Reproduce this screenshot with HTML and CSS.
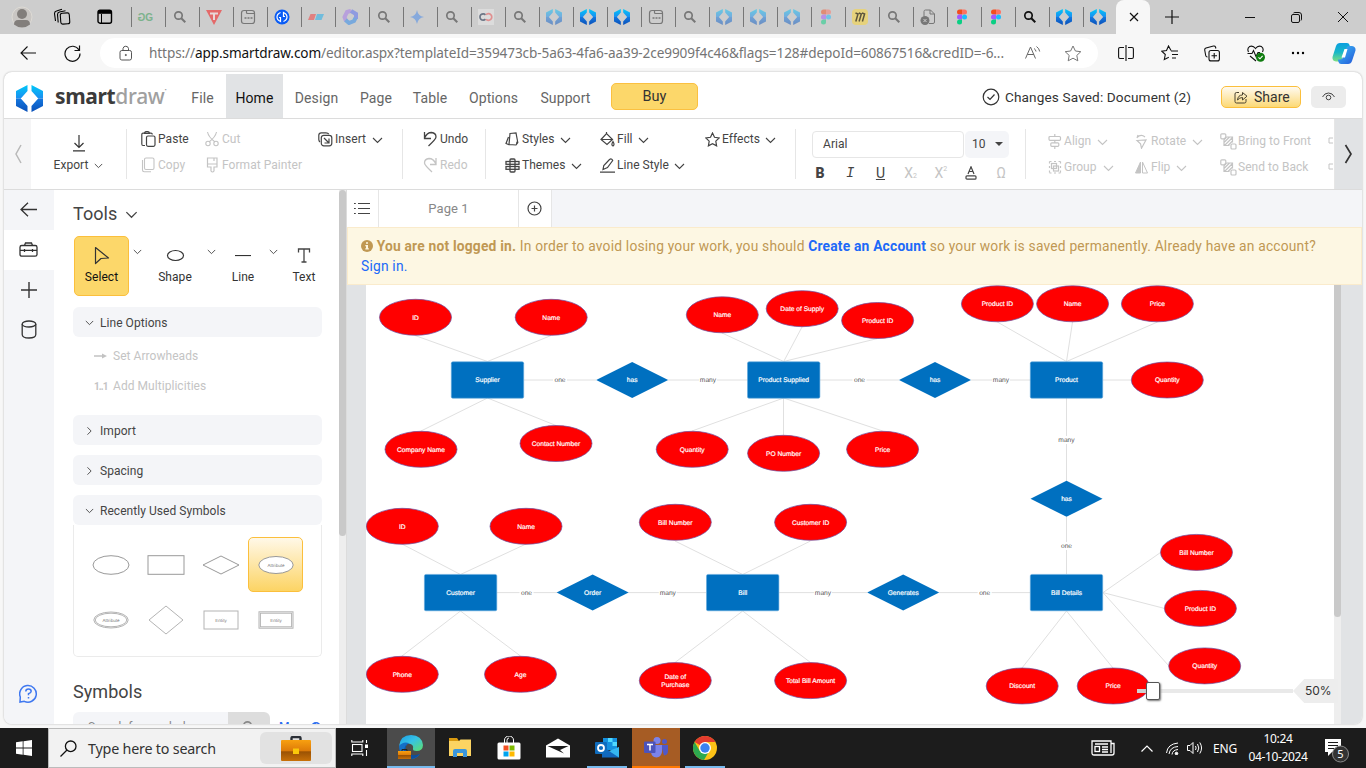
FILE: index.html
```html
<!DOCTYPE html>
<html lang="en">
<head>
<meta charset="utf-8">
<title>SmartDraw</title>
<link rel="stylesheet" href="styles.css">
</head>
<body>
<svg class="defs" width="0" height="0">
  <defs>
    <linearGradient id="gTop" x1="0" y1="0" x2="0" y2="1"><stop offset="0" stop-color="#00c8f8"/><stop offset="1" stop-color="#1a8df0"/></linearGradient>
    <linearGradient id="gBot" x1="0" y1="0" x2="0" y2="1"><stop offset="0" stop-color="#1478e0"/><stop offset="1" stop-color="#0a50b8"/></linearGradient>
    <linearGradient id="gBag" x1="0" y1="0" x2="0" y2="1"><stop offset="0" stop-color="#f8a010"/><stop offset=".52" stop-color="#dd7a08"/><stop offset=".56" stop-color="#9a5204"/><stop offset="1" stop-color="#c87008"/></linearGradient>
    <linearGradient id="gEdge" x1="0" y1="0" x2="1" y2="1"><stop offset="0" stop-color="#1b9de2"/><stop offset=".45" stop-color="#35c1e8"/><stop offset="1" stop-color="#5fe06a"/></linearGradient>
    <linearGradient id="gCop" x1="0" y1="0" x2="0" y2="1"><stop offset="0" stop-color="#0a9fe0"/><stop offset=".5" stop-color="#18b8c8"/><stop offset="1" stop-color="#7fe080"/></linearGradient>
    <linearGradient id="gCop2" x1="0" y1="0" x2="1" y2="1"><stop offset="0" stop-color="#3cc0f8"/><stop offset="1" stop-color="#2456d8"/></linearGradient>
  </defs>
  <symbol id="sd" viewBox="0 0 27 27">
    <path fill="url(#gTop)" d="M11.500 0v6L4.800 13.500H0V6zM15.500 0v6l6.700 7.500H27V6z"/>
    <path fill="url(#gBot)" d="M11.500 27v-6L4.800 13.400H0V21zM15.500 27v-6l6.700-7.600H27V21z"/>
  </symbol>
  <symbol id="mag" viewBox="0 0 16 16"><circle cx="6.500" cy="6.500" r="3.700" fill="none" stroke="currentColor" stroke-width="1.700"/><path d="M9.300 9.300l4 4" stroke="currentColor" stroke-width="2"/></symbol>
  <symbol id="frame" viewBox="0 0 16 16"><path d="M4 1.500h8q2.500 0 2.500 2.500v8q0 2.500-2.500 2.500H4Q1.500 14.500 1.500 12V4Q1.500 1.500 4 1.500zM6.500 1.500v2q0 1 1 1h7" fill="none" stroke="currentColor" stroke-width="1.200"/><path d="M4.500 9h2M7.500 9h2M10.500 9h2" stroke="currentColor" stroke-width="1.600"/></symbol>
  <symbol id="figma" viewBox="0 0 16 16"><path d="M8 .5H5.500a2.500 2.500 0 000 5H8z" fill="#f24e1e"/><path d="M8 .5h2.500a2.500 2.500 0 010 5H8z" fill="#ff7262"/><path d="M8 5.500H5.500a2.500 2.500 0 000 5H8z" fill="#a259ff"/><circle cx="10.500" cy="8" r="2.500" fill="#1abcfe"/><path d="M8 10.500H5.500a2.500 2.500 0 102.500 2.500z" fill="#0acf83"/></symbol>
  <symbol id="chev" viewBox="0 0 11 7"><path d="M1 1l4.500 4.500L10 1" fill="none" stroke="currentColor" stroke-width="1.100"/></symbol>
  <symbol id="bag" viewBox="0 0 30 25"><path d="M10.500 5V2.200Q10.500 1 12 1h6q1.500 0 1.500 1.200V5" fill="none" stroke="#2a2f36" stroke-width="2.400"/><rect y="4" width="30" height="21" rx="1" fill="url(#gBag)"/><rect x="12" y="12.500" width="6" height="5.500" fill="#fbc80a"/></symbol>
  <symbol id="pic-stack" viewBox="0 0 17 17"><g fill="none" stroke="currentColor" stroke-width="1.200"><rect x=".8" y=".8" width="5" height="5" rx="1"/><rect x="11" y="11" width="5" height="5" rx="1"/><path d="M7 4h5.500v5.500M4 7v5.500h5.500M4.500 9l5-5M4.500 12.500l8-8M8 12.500l4.500-4.500M7 4Q4.500 4 4 7"/></g></symbol>
  <g id="e"><ellipse rx="36" ry="18" fill="#f00" stroke="#6a4fa0" stroke-width=".7"/></g>
  <g id="r"><rect x="-36.200" y="-18.200" width="72.400" height="36.400" rx="1.500" fill="#0070c0" stroke="#62a8dc" stroke-width=".6"/></g>
  <g id="d"><path d="M-36 0L0-18 36 0 0 18z" fill="#0070c0"/></g>
</svg>

<div class="tabstrip">
  <div class="corner">
    <svg width="22" height="22" viewBox="0 0 22 22"><circle cx="11" cy="11" r="10" fill="#c9c6c3" stroke="#dedbd5"/><circle cx="11" cy="8" r="5" fill="#827e7b"/><path d="M3 18.500Q3 14 7 14h8q4 0 4 4.500-3.500 3-8 3t-8-3z" fill="#827e7b"/></svg>
    <svg width="18" height="18" viewBox="0 0 18 18" fill="none" stroke="#000" stroke-width="1.100"><rect x="7.500" y="5" width="9" height="11" rx="2" transform="rotate(-4 12 10)"/><path d="M5.200 14.500L4.500 6.500Q4.500 4.500 6.500 4l6-1.200M2.500 13L1.500 5.500Q1.500 3.500 3.500 3L9 1.200"/></svg>
    <svg width="16" height="16" viewBox="0 0 16 16" fill="none" stroke="#000"><rect x="1" y="1.200" width="13.500" height="13" rx="2" stroke-width="1.400"/><path d="M1 3.300h13.500" stroke-width="3"/><path d="M4.500 5v9"/></svg>
  </div>
  <div class="tabs">
    <div class="tab"><b class="gfg"><i>G</i>G</b></div>
    <div class="tab dim"><svg width="16" height="16"><use href="#mag"/></svg></div>
    <div class="tab"><svg width="16" height="16" viewBox="0 0 16 16"><path d="M0 1h16L8 16z" fill="#e46a6a"/><path d="M4 3.500h8v2H9V11H7V5.500H4z" fill="#e8d8d8"/></svg></div>
    <div class="tab dim"><svg width="16" height="16"><use href="#frame"/></svg></div>
    <div class="tab"><svg width="16" height="16" viewBox="0 0 16 16"><circle cx="8" cy="8" r="7.500" fill="#0a5cf5"/><path d="M6.500 3.500Q3 5 3 8t3.500 4.500V8.500H5M9.500 12.500Q13 11 13 8T9.500 3.500v4H11" fill="none" stroke="#fff" stroke-width="1.200"/></svg></div>
    <div class="tab"><svg width="16" height="16" viewBox="0 0 16 16"><path d="M2.500 5H8l-2 6H0z" fill="#e08080"/><path d="M9 5h7l-2.500 6H7z" fill="#70bcdc"/></svg></div>
    <div class="tab"><svg width="16" height="16" viewBox="0 0 16 16" fill="none" stroke-width="4"><path d="M4 12L2.500 8 5 3l4-1.200" stroke="#b8a0dc"/><path d="M9 2l5 3v5" stroke="#8f9be0"/><path d="M13.500 9L12 12l-5 2-3.500-3" stroke="#78a9dd"/></svg></div>
    <div class="tab dim"><svg width="16" height="16"><use href="#mag"/></svg></div>
    <div class="tab"><svg width="14" height="14" viewBox="0 0 14 14"><path d="M7 0Q8 6 14 7 8 8 7 14 6 8 0 7 6 6 7 0z" fill="#86a9dc"/></svg></div>
    <div class="tab dim"><svg width="16" height="16"><use href="#mag"/></svg></div>
    <div class="tab"><svg width="16" height="16" viewBox="0 0 16 16" fill="none" stroke-width="1.700"><rect width="16" height="16" fill="#dcdcdc"/><path d="M7.500 5.800a3.200 3.200 0 100 4.400" stroke="#6c7686"/><path d="M8 10.200a3.300 3.300 0 100-4.400" stroke="#e09090"/></svg></div>
    <div class="tab dim"><svg width="16" height="16"><use href="#mag"/></svg></div>
    <div class="tab fade"><svg width="16" height="16"><use href="#sd"/></svg></div>
    <div class="tab"><svg width="16" height="16"><use href="#sd"/></svg></div>
    <div class="tab"><svg width="16" height="16"><use href="#sd"/></svg></div>
    <div class="tab dim"><svg width="16" height="16"><use href="#frame"/></svg></div>
    <div class="tab dim"><svg width="16" height="16"><use href="#mag"/></svg></div>
    <div class="tab fade"><svg width="16" height="16"><use href="#sd"/></svg></div>
    <div class="tab fade"><svg width="16" height="16"><use href="#sd"/></svg></div>
    <div class="tab fade"><svg width="16" height="16"><use href="#sd"/></svg></div>
    <div class="tab fade"><svg width="16" height="16"><use href="#figma"/></svg></div>
    <div class="tab"><svg width="16" height="16" viewBox="0 0 16 16"><rect width="16" height="16" rx="4" fill="#e6d27c"/><path d="M3.500 4L6 5 3.800 12.500M6.800 4L9.300 5l-2.200 7.500M10 4l2.600 1-2.200 7.500" fill="none" stroke="#5c553c" stroke-width="1.500"/></svg></div>
    <div class="tab dim"><svg width="16" height="16"><use href="#mag"/></svg></div>
    <div class="tab dim"><svg width="16" height="16" viewBox="0 0 16 16"><path d="M4 7V2.500Q4 1 5.500 1h5L14.500 5v8q0 1.500-1.500 1.500H9M10 1v4h4.500" fill="none" stroke="currentColor"/><circle cx="5" cy="11.500" r="4.500" fill="currentColor"/><path d="M3.500 10l3 3M6.500 10l-3 3" stroke="#cdcdcd"/></svg></div>
    <div class="tab"><svg width="16" height="16"><use href="#figma"/></svg></div>
    <div class="tab"><svg width="16" height="16"><use href="#figma"/></svg></div>
    <div class="tab"><svg width="16" height="16"><use href="#mag"/></svg></div>
    <div class="tab"><svg width="16" height="16"><use href="#sd"/></svg></div>
    <div class="tab"><svg width="16" height="16"><use href="#sd"/></svg></div>
    <div class="tab-active"><svg width="10" height="10" viewBox="0 0 10 10"><path d="M1 1l8 8M9 1L1 9" stroke="#111" stroke-width="1.200"/></svg></div>
    <div class="tab-new"><svg width="14" height="14" viewBox="0 0 14 14"><path d="M7 0v14M0 7h14" stroke="#111" stroke-width="1.200"/></svg></div>
  </div>
  <div class="winctl">
    <svg width="10" height="10" viewBox="0 0 10 10"><path d="M0 5.500h10" stroke="#111"/></svg>
    <svg width="11" height="11" viewBox="0 0 11 11" fill="none" stroke="#111"><rect x=".5" y="2.500" width="8" height="8" rx="1.500"/><path d="M2.500 1Q3 .5 4 .5h4q2.500 0 2.500 2.500v4q0 1-.5 1.500"/></svg>
    <svg width="10" height="10" viewBox="0 0 10 10"><path d="M0 0l10 10M10 0L0 10" stroke="#111"/></svg>
  </div>
</div>

<div class="addressbar">
  <div class="navbtns">
    <svg width="16" height="14" viewBox="0 0 16 14" fill="none" stroke="#111" stroke-width="1.100"><path d="M16 7H1M7.500 .5L1 7l6.500 6.500"/></svg>
    <svg width="17" height="17" viewBox="0 0 17 17" fill="none" stroke="#111" stroke-width="1.200"><path d="M15 5a7.500 7.500 0 101 3.500M15.500 .5v5h-5"/></svg>
  </div>
  <div class="pill">
    <svg width="14" height="16" viewBox="0 0 14 16" fill="none" stroke="#555"><rect x="1" y="5.500" width="11.500" height="9.500" rx="1.800"/><path d="M4 5.500V3.500a2.800 2.800 0 015.500 0v2"/><circle cx="6.800" cy="10" r=".6" fill="#555"/></svg>
    <span class="url">https://<i>app.smartdraw.com</i>/editor.aspx?templateId=359473cb-5a63-4fa6-aa39-2ce9909f4c46&amp;flags=128#depoId=60867516&amp;credID=-6...</span>
    <svg class="read" width="16" height="16" viewBox="0 0 16 16" fill="none" stroke="#666"><path d="M.5 13.500L5.500 2l5 11.500M2.300 9.500h6.500M9 3.500q1.800 1 2 3M11.500 1.500q2.800 2 3.200 5"/></svg>
    <svg width="18" height="17" viewBox="0 0 18 17" fill="none" stroke="#777" stroke-linejoin="round"><path d="M9 1l2.400 5 5.400.7-4 3.700 1 5.400L9 13.200l-4.800 2.600 1-5.400-4-3.700L6.600 6z"/></svg>
  </div>
  <div class="tools-right">
    <svg width="16" height="16" viewBox="0 0 16 16" fill="none" stroke="#111" stroke-width="1.100"><path d="M6 2.500H2Q.6 2.500.6 4v8q0 1.500 1.400 1.500h4M10 2.500h4q1.400 0 1.400 1.500v8q0 1.500-1.400 1.500h-4M8 0v16"/></svg>
    <svg width="17" height="16" viewBox="0 0 17 16" fill="none" stroke="#111" stroke-width="1.100"><path d="M10 5.500L7.500 1 5.500 5.500.8 6.200l3.500 3.300-1 5 4.500-2.300M10 6h7M11 9.500h6M11 13h4"/></svg>
    <svg width="16" height="17" viewBox="0 0 16 17" fill="none" stroke="#111" stroke-width="1.100"><rect x="5" y="5.500" width="10.400" height="10.400" rx="2"/><path d="M3.500 12Q2 12 1.700 10.500L.7 5Q.5 3.500 2 3L9.500 1q1.500-.3 2 1l.4 1.500M10.200 8v5.500M7.500 10.700H13"/></svg>
    <svg width="18" height="17" viewBox="0 0 18 17" fill="none" stroke="#111" stroke-width="1.100"><path d="M1.500 7Q-.2 3.500 2.500 1.600 6 .2 8.500 3.500 11 .2 14.500 1.600 17.200 3.500 15.500 7M.5 8.500H5l1.500-3 2.500 6 2-4h2M3 11l6 5"/><circle cx="13.500" cy="12.300" r="4.500" fill="#107c10" stroke="none"/><path d="M11.500 12.300l1.500 1.500 2.600-3" stroke="#fff"/></svg>
    <svg width="14" height="4" viewBox="0 0 14 4"><circle cx="2" cy="2" r="1.200"/><circle cx="7" cy="2" r="1.200"/><circle cx="12" cy="2" r="1.200"/></svg>
    <svg width="24" height="23" viewBox="0 0 24 23"><path d="M8 1h7q2 0 2.500 2l1 3.500h-3q-2.500 0-3 2.500L10 17q-.6 2.500-3 2.500H4Q0 19 .5 15L4 4q1-3 4-3z" fill="url(#gCop)"/><path d="M16 22H9q-2 0-2.500-2l-.7-2.500H8q2.500 0 3-2.500L14 6.500q.6-2.500 3-2.500h3q4 .5 3.500 4.500L20 19q-1 3-4 3z" fill="url(#gCop2)"/><path d="M9.500 15.500L12.500 7h3l-2.500 8.500z" fill="#fff"/></svg>
  </div>
</div>

<div class="app">
  <header class="head">
    <svg class="logo" width="27" height="27"><use href="#sd"/></svg>
    <div class="brand"><b>smart</b><span>draw</span><sup>&#8226;</sup></div>
    <nav class="menu">
      <a class="m1">File</a><a class="m2">Home</a><a class="m3">Design</a><a class="m4">Page</a><a class="m5">Table</a><a class="m6">Options</a><a class="m7">Support</a>
    </nav>
    <div class="buy">Buy</div>
    <div class="saved"><svg width="18" height="18" viewBox="0 0 18 18" fill="none" stroke="#333" stroke-width="1.200"><circle cx="9" cy="9" r="7.800"/><path d="M5.500 9l2.500 2.500 4.500-5"/></svg><span>Changes Saved: Document (2)</span></div>
    <div class="share"><svg width="14" height="14" viewBox="0 0 14 14" fill="none" stroke="#4a4330"><path d="M5 2.500H2.500Q1 2.500 1 4v7.500Q1 13 2.500 13h8q1.500 0 1.500-1.500V9M3.500 10Q4 5 8.500 5V2.500L13 6.200 8.500 10V7.500Q5.500 7.500 3.500 10z"/></svg><span>Share</span></div>
    <div class="eye"><svg width="13" height="10" viewBox="0 0 13 10" fill="none" stroke="#444"><path d="M.5 5Q2.500 1 6.500 1t6 4"/><circle cx="6.500" cy="5.500" r="2.300"/></svg></div>
  </header>

  <div class="ribbon">
    <div class="arrow-l"><svg width="8" height="20" viewBox="0 0 8 20" fill="none" stroke="#b8b8b8" stroke-width="1.500"><path d="M7 1L2 10l5 9"/></svg></div>
    <div class="grp g-export">
      <svg width="14" height="18" viewBox="0 0 14 18" fill="none" stroke="#333" stroke-width="1.200"><path d="M7 1v12.500M2.500 9L7 13.500 11.500 9M1 16.800h12"/></svg>
      <div class="btn">Export <svg width="9" height="6"><use href="#chev"/></svg></div>
    </div>
    <div class="grp g-clip">
      <div class="btn"><svg width="15" height="16" viewBox="0 0 15 16" fill="none" stroke="#444" stroke-width="1.200"><path d="M4 14.500H2Q.8 14.500.8 13V3.500Q.8 2.200 2 2.200h8q1.300 0 1.300 1.300M3.500 2.500q0-2 2.500-2t2.500 2z"/><rect x="5.500" y="5" width="8.500" height="10.300" rx="1.500"/></svg>Paste</div>
      <div class="btn off"><svg width="15" height="16" viewBox="0 0 15 16" fill="none" stroke="currentColor" stroke-width="1.100"><path d="M2.500 1q1 5 7.500 10M11.500 1q-1 5-7.500 10"/><circle cx="3" cy="12.500" r="2.200"/><circle cx="11" cy="12.500" r="2.200"/></svg>Cut</div>
      <div class="btn"><svg width="15" height="15" viewBox="0 0 15 15" fill="none" stroke="#444" stroke-width="1.200"><rect x="3.300" y="3.300" width="10.500" height="10.500" rx="2.500"/><path d="M2 10Q.8 9 .8 7.500V3.300Q.8.800 3.300.8H8q2 0 2.800 1.300M6 6l5 5M11 6.500V11H6.500"/></svg>Insert<svg class="cv" width="11" height="7"><use href="#chev"/></svg></div>
      <div class="btn off"><svg width="15" height="16" viewBox="0 0 15 16" fill="none" stroke="currentColor" stroke-width="1.100"><rect x="3.500" y="1" width="9.500" height="11.500" rx="1.500"/><path d="M1.500 3v10q0 1.700 1.700 1.700H10"/></svg>Copy</div>
      <div class="btn off"><svg width="15" height="16" viewBox="0 0 15 16" fill="none" stroke="currentColor" stroke-width="1.200"><path d="M2.500 1h9.500v9H9v4q-1.500 2-3 0v-4H2.500zM2.500 7H12M9 1v3"/></svg>Format Painter</div>
    </div>
    <div class="grp g-undo">
      <div class="btn"><svg width="15" height="16" viewBox="0 0 15 16" fill="none" stroke="#444" stroke-width="1.300"><path d="M1.500 1v6.500H8M1.500 7Q4 1.500 8.500 1.500 13 2 13 6q0 2-7.500 9"/></svg>Undo</div>
      <div class="btn off"><svg width="15" height="16" viewBox="0 0 15 16" fill="none" stroke="currentColor" stroke-width="1.300"><path d="M13 1v6.500H7M13 7Q10.500 1.500 6 1.500 1.500 2 1.500 6q0 2 7.500 9"/></svg>Redo</div>
    </div>
    <div class="grp g-style">
      <div class="btn"><svg width="15" height="14" viewBox="0 0 15 14" fill="none" stroke="#444" stroke-width="1.200"><path d="M5 1.500l6-.7 1.800 9.700-1.800 2.500-7-.5zM3.500 5L1 11.500l3 1.300M11.500 12l.5-2h1.200"/></svg>Styles<svg class="cv" width="11" height="7"><use href="#chev"/></svg></div>
      <div class="btn"><svg width="15" height="15" viewBox="0 0 15 15" fill="none" stroke="#444" stroke-width="1.200"><path d="M1 7.500L6.500 1.500l6 6-5.500 5zM6.500 1.500V0M1 7.500h11.500"/><path d="M13 9.500q2 3.200 0 4.500-2.200-1 0-4.500z"/></svg>Fill<svg class="cv" width="11" height="7"><use href="#chev"/></svg></div>
      <div class="btn"><svg width="15" height="15" viewBox="0 0 15 15" fill="none" stroke="#444" stroke-width="1.200"><path d="M7.500 1l2 4.300 4.700.6-3.400 3.200.8 4.700-4.100-2.200-4.100 2.200.8-4.700L.8 5.900l4.700-.6z"/></svg>Effects<svg class="cv" width="11" height="7"><use href="#chev"/></svg></div>
      <div class="btn"><svg width="15" height="15" viewBox="0 0 15 15" fill="none" stroke="#444" stroke-width="1.300"><rect x="5" y="1" width="5" height="13" rx="1"/><rect x="1" y="3.500" width="13" height="2.800"/><rect x="1" y="8.500" width="13" height="2.800"/></svg>Themes<svg class="cv" width="11" height="7"><use href="#chev"/></svg></div>
      <div class="btn wide"><svg width="15" height="15" viewBox="0 0 15 15" fill="none" stroke="#444" stroke-width="1.200"><path d="M3 11.500l.8-4L9.500 1.500q2-1.500 3.200 1L7.500 9.500zM0 14.200h15"/></svg>Line Style<svg class="cv" width="11" height="7"><use href="#chev"/></svg></div>
    </div>
    <div class="grp g-font">
      <div class="fontrow"><div class="fname">Arial</div><div class="fsize">10<svg width="8" height="4" viewBox="0 0 8 4"><path d="M0 0h8L4 4z" fill="#444"/></svg></div></div>
      <div class="fmt">
        <b>B</b><em>I</em><u>U</u><span class="off">X<sub>2</sub></span><span class="off">X<sup>2</sup></span>
        <span><svg width="12" height="14" viewBox="0 0 12 14" fill="none" stroke="#444" stroke-width="1.200"><path d="M3 8L6 .8 9 8M4 5.500h4"/><rect x="1" y="9.800" width="10" height="3.400" rx="1"/></svg></span>
        <span class="off">&Omega;</span>
      </div>
    </div>
    <div class="grp g-arr">
      <div class="btn off"><svg width="14" height="15" viewBox="0 0 14 15" fill="none" stroke="currentColor" stroke-width="1.200"><rect x="1" y="2.500" width="11.500" height="3.800" rx="1"/><rect x="2.800" y="8.800" width="8" height="3.500" rx="1"/><path d="M6.800 0v2.500M6.800 6.300v2.500M6.800 12.500V15"/></svg>Align<svg class="cv" width="11" height="7"><use href="#chev"/></svg></div>
      <div class="btn off"><svg width="14" height="15" viewBox="0 0 14 15" fill="none" stroke="currentColor" stroke-width="1.200"><path d="M2 6.500l9-.5-4.500 8.200-1-4.500zM2 4l1-3M2 3.500Q6-.5 10 3"/></svg>Rotate<svg class="cv" width="11" height="7"><use href="#chev"/></svg></div>
      <div class="btn off stk"><svg width="17" height="17"><use href="#pic-stack"/></svg>Bring to Front</div>
      <div class="btn off"><svg width="5" height="8" viewBox="0 0 5 8" fill="none" stroke="currentColor"><path d="M5 1H1v5h4"/></svg></div>
      <div class="btn off"><svg width="14" height="15" viewBox="0 0 14 15" fill="none" stroke="currentColor" stroke-width="1.200"><rect x="3.500" y="3.500" width="5" height="5"/><rect x="5.500" y="6" width="5" height="5"/><path d="M1.500 1.500v11.500M12.500 1.500v11.500M1.500 1.500h11M1.500 13h11" stroke-dasharray="2 2.500"/></svg>Group<svg class="cv" width="11" height="7"><use href="#chev"/></svg></div>
      <div class="btn off"><svg width="14" height="13" viewBox="0 0 14 13" fill="none" stroke="currentColor"><path d="M5.500 1v11H.5z" fill="currentColor"/><path d="M7.500 1v11h5z"/></svg>Flip<svg class="cv" width="11" height="7"><use href="#chev"/></svg></div>
      <div class="btn off stk"><svg width="17" height="17"><use href="#pic-stack"/></svg>Send to Back</div>
      <div class="btn off"><svg width="5" height="8" viewBox="0 0 5 8" fill="none" stroke="currentColor"><path d="M5 1H1v5h4"/></svg></div>
    </div>
    <div class="arrow-r"><svg width="9" height="20" viewBox="0 0 9 20" fill="none" stroke="#333" stroke-width="1.700"><path d="M1.500 1l5.500 9-5.500 9"/></svg></div>
  </div>

  <div class="main">
    <div class="rail">
      <div class="r"><svg width="17" height="15" viewBox="0 0 17 15" fill="none" stroke="#333" stroke-width="1.300"><path d="M17 7.500H1M8 .7L1 7.500l7 6.800"/></svg></div>
      <div class="r on"><svg width="19" height="15" viewBox="0 0 19 15" fill="none" stroke="#333" stroke-width="1.300"><rect x="1" y="3.500" width="17" height="10.700" rx="1.800"/><path d="M5.500 3.500L6.500 1h6l1 2.500M1 8.300h17M5.500 7v3M13.500 7v3"/></svg></div>
      <div class="r"><svg width="16" height="16" viewBox="0 0 16 16" stroke="#333" stroke-width="1.400"><path d="M8 0v16M0 8h16"/></svg></div>
      <div class="r"><svg width="16" height="19" viewBox="0 0 16 19" fill="none" stroke="#333" stroke-width="1.300"><ellipse cx="8" cy="4" rx="6.800" ry="3"/><path d="M1.200 4v10.500Q1.200 18 8 18t6.800-3.500V4"/></svg></div>
      <div class="help"><svg width="19" height="19" viewBox="0 0 19 19" fill="none" stroke="#3f78f0" stroke-width="1.500"><path d="M1 18l.3-5a8.300 8.300 0 114 4.300zM6.800 7.500q0-2.500 2.700-2.500t2.700 2.300q0 1.500-2.700 2.500v1.500M9.500 13v1.500"/></svg></div>
    </div>

    <div class="panel">
      <div class="ptitle">Tools <svg width="13" height="8"><use href="#chev"/></svg></div>
      <div class="toolrow">
        <div class="tool sel"><svg width="16" height="19" viewBox="0 0 16 19" fill="none" stroke="#333" stroke-width="1.200" stroke-linejoin="round"><path d="M1.500 1.500L14.500 12 7 12.500 1.500 17.500z"/></svg>Select</div>
        <svg class="tcv" width="9" height="6"><use href="#chev"/></svg>
        <div class="tool t2"><svg width="19" height="19" viewBox="0 0 19 19" fill="none" stroke="#333" stroke-width="1.200"><ellipse cx="9.500" cy="9.500" rx="8" ry="5"/></svg>Shape</div>
        <svg class="tcv" width="9" height="6"><use href="#chev"/></svg>
        <div class="tool t3"><svg width="18" height="19" viewBox="0 0 18 19" stroke="#333" stroke-width="1.200"><path d="M1 9.500h16"/></svg>Line</div>
        <svg class="tcv" width="9" height="6"><use href="#chev"/></svg>
        <div class="tool t4"><svg width="14" height="19" viewBox="0 0 14 19" fill="none" stroke="#444" stroke-width="1.300"><path d="M1.500 6.500V3h11v3.500M7 3v12.500M4.500 16h5"/></svg>Text</div>
      </div>
      <div class="acc"><svg width="9" height="6"><use href="#chev"/></svg>Line Options</div>
      <div class="opt o1"><svg width="13" height="8" viewBox="0 0 13 8" fill="#c2c2c2"><path d="M0 3.200h8V1.500L13 4 8 6.500V4.800H0z"/></svg>Set Arrowheads</div>
      <div class="opt o2"><b>1..1</b>Add Multiplicities</div>
      <div class="acc closed"><svg width="9" height="6"><use href="#chev"/></svg>Import</div>
      <div class="acc closed"><svg width="9" height="6"><use href="#chev"/></svg>Spacing</div>
      <div class="acc open"><svg width="9" height="6"><use href="#chev"/></svg>Recently Used Symbols</div>
      <div class="syms">
        <div><svg width="38" height="20" viewBox="0 0 38 20"><ellipse cx="19" cy="10" rx="18" ry="9.300"/></svg></div>
        <div><svg width="38" height="20" viewBox="0 0 38 20"><rect x="1" y=".7" width="36" height="18.600"/></svg></div>
        <div><svg width="38" height="20" viewBox="0 0 38 20"><path d="M1 10L19 1l18 9-18 9z"/></svg></div>
        <div class="pick"><svg width="38" height="20" viewBox="0 0 38 20"><ellipse cx="19" cy="10" rx="17.200" ry="8.500" fill="#fff"/><text x="19" y="12">Attribute</text></svg></div>
        <div class="soft"><svg width="38" height="20" viewBox="0 0 38 20"><ellipse cx="19" cy="10" rx="17.200" ry="8"/><ellipse cx="19" cy="10" rx="15.800" ry="6.800"/><text x="19" y="12">Attribute</text></svg></div>
        <div class="soft"><svg width="36" height="30" viewBox="0 0 36 30"><path d="M1 15L18 1l17 14-17 14z"/></svg></div>
        <div class="soft"><svg width="38" height="20" viewBox="0 0 38 20"><rect x="2" y="1" width="34" height="18"/><text x="19" y="12">Entity</text></svg></div>
        <div class="soft"><svg width="38" height="20" viewBox="0 0 38 20"><rect x="2" y="1.800" width="34" height="16.400"/><rect x="3.400" y="3.200" width="31.200" height="13.600"/><text x="19" y="12">Entity</text></svg></div>
      </div>
      <div class="ptitle2">Symbols</div>
      <div class="find"><span class="ph">Search for symbols</span><span class="go"><svg width="16" height="16"><use href="#mag"/></svg></span><b>More</b><i>+</i></div>
    </div>
    <div class="pscroll"><div></div></div>

    <div class="work">
      <div class="pages">
        <div class="plist"><svg width="16" height="13" viewBox="0 0 16 13" fill="none" stroke="#444" stroke-width="1.200"><path d="M4 1.500h12M4 6.500h12M4 11.500h12M0 1.500h1.800M0 6.500h1.800M0 11.500h1.800"/></svg></div>
        <div class="pname">Page 1</div>
        <div class="padd"><svg width="15" height="15" viewBox="0 0 15 15" fill="none" stroke="#444" stroke-width="1.200"><circle cx="7.500" cy="7.500" r="6.500"/><path d="M7.500 4.500v6M4.500 7.500h6"/></svg></div>
      </div>
      <div class="warn">
        <svg width="12" height="12" viewBox="0 0 12 12"><circle cx="6" cy="6" r="6" fill="#c09853"/><path d="M5 2.300h2v1.500H5zM4.300 5H7v3.200h.8v1.300H4.300V8.200H5V6.300h-.7z" fill="#fdf6e1"/></svg><b> You are not logged in.</b> In order to avoid losing your work, you should <b class="lk">Create an Account</b> so your work is saved permanently. Already have an account?<br><span class="lk">Sign in.</span>
      </div>
      <div class="stage">
        <svg class="diagram" width="968" height="439" viewBox="366 285 968 439">
          <g class="ln">
            <path d="M415 335.500L487.500 361.500 551 335.500M421 431L487.500 398 556 425.500M524 380h72M668 380h80"/>
            <path d="M722 333L783.700 361.500 802 327M783.700 361.500L877.600 338.500M692 431L783.700 398 882.600 431M783.500 398v37M820 380h79M971 380h60M1103 380h28"/>
            <path d="M997.300 322L1066.500 361.500 1072.500 322M1066.500 361.500L1157.500 322M1066.500 398v83M1066.500 517v57"/>
            <path d="M402 544L460.500 574.500 526 544M402 656L460.500 611 520.500 656M497 592.600h60M628 592.600h78"/>
            <path d="M675 541L742.700 574.500 810.500 541M675 662.500L742.700 611 810.500 662.500M779 592.600h88M939 592.600h91"/>
            <path d="M1160.500 552.500L1103 592.600 1164 608.300M1103 592.600L1168.500 665.500M1022 668L1066.500 611 1113 668"/>
          </g>
          <g class="lb">
            <g transform="translate(560 380)"><rect x="-7" y="-4" width="14" height="8"/><text>one</text></g>
            <g transform="translate(708 380)"><rect x="-9" y="-4" width="18" height="8"/><text>many</text></g>
            <g transform="translate(859.500 380)"><rect x="-7" y="-4" width="14" height="8"/><text>one</text></g>
            <g transform="translate(1001 380)"><rect x="-9" y="-4" width="18" height="8"/><text>many</text></g>
            <g transform="translate(1066.500 440)"><rect x="-9" y="-4" width="18" height="8"/><text>many</text></g>
            <g transform="translate(1066.500 546)"><rect x="-7" y="-4" width="14" height="8"/><text>one</text></g>
            <g transform="translate(526.500 592.600)"><rect x="-7" y="-4" width="14" height="8"/><text>one</text></g>
            <g transform="translate(667.800 592.600)"><rect x="-9" y="-4" width="18" height="8"/><text>many</text></g>
            <g transform="translate(823 592.600)"><rect x="-9" y="-4" width="18" height="8"/><text>many</text></g>
            <g transform="translate(984.700 592.600)"><rect x="-7" y="-4" width="14" height="8"/><text>one</text></g>
          </g>
          <g class="nd">
            <g transform="translate(415.500 317.300)"><use href="#e"/><text>ID</text></g>
            <g transform="translate(551.200 317.300)"><use href="#e"/><text>Name</text></g>
            <g transform="translate(722.300 314.800)"><use href="#e"/><text>Name</text></g>
            <g transform="translate(802.200 308.700)"><use href="#e"/><text>Date of Supply</text></g>
            <g transform="translate(877.600 320.500)"><use href="#e"/><text>Product ID</text></g>
            <g transform="translate(997.400 303.800)"><use href="#e"/><text>Product ID</text></g>
            <g transform="translate(1072.600 303.800)"><use href="#e"/><text>Name</text></g>
            <g transform="translate(1157.400 303.800)"><use href="#e"/><text>Price</text></g>
            <g transform="translate(1167.300 380)"><use href="#e"/><text>Quantity</text></g>
            <g transform="translate(421 449.300)"><use href="#e"/><text>Company Name</text></g>
            <g transform="translate(556 443.500)"><use href="#e"/><text>Contact Number</text></g>
            <g transform="translate(692.200 449.300)"><use href="#e"/><text>Quantity</text></g>
            <g transform="translate(783.600 453.300)"><use href="#e"/><text>PO Number</text></g>
            <g transform="translate(882.600 449.300)"><use href="#e"/><text>Price</text></g>
            <g transform="translate(402.300 526.300)"><use href="#e"/><text>ID</text></g>
            <g transform="translate(526 526.300)"><use href="#e"/><text>Name</text></g>
            <g transform="translate(675.300 522.300)"><use href="#e"/><text>Bill Number</text></g>
            <g transform="translate(810.600 522.300)"><use href="#e"/><text>Customer ID</text></g>
            <g transform="translate(402.300 674.300)"><use href="#e"/><text>Phone</text></g>
            <g transform="translate(520.500 674.300)"><use href="#e"/><text>Age</text></g>
            <g transform="translate(675.300 680.600)"><use href="#e"/><text><tspan x="0" dy="-4">Date of</tspan><tspan x="0" dy="8">Purchase</tspan></text></g>
            <g transform="translate(810.600 680.600)"><use href="#e"/><text>Total Bill Amount</text></g>
            <g transform="translate(1196.500 552.400)"><use href="#e"/><text>Bill Number</text></g>
            <g transform="translate(1200.400 608.400)"><use href="#e"/><text>Product ID</text></g>
            <g transform="translate(1204.700 665.900)"><use href="#e"/><text>Quantity</text></g>
            <g transform="translate(1022.200 686)"><use href="#e"/><text>Discount</text></g>
            <g transform="translate(1113.200 686)"><use href="#e"/><text>Price</text></g>
            <g transform="translate(487.500 380)"><use href="#r"/><text>Supplier</text></g>
            <g transform="translate(783.700 380)"><use href="#r"/><text>Product Supplied</text></g>
            <g transform="translate(1066.500 380)"><use href="#r"/><text>Product</text></g>
            <g transform="translate(460.600 592.600)"><use href="#r"/><text>Customer</text></g>
            <g transform="translate(742.700 592.600)"><use href="#r"/><text>Bill</text></g>
            <g transform="translate(1066.500 592.600)"><use href="#r"/><text>Bill Details</text></g>
            <g transform="translate(632.200 380)"><use href="#d"/><text>has</text></g>
            <g transform="translate(935 380)"><use href="#d"/><text>has</text></g>
            <g transform="translate(1066.500 498.800)"><use href="#d"/><text>has</text></g>
            <g transform="translate(592.600 592.600)"><use href="#d"/><text>Order</text></g>
            <g transform="translate(903.200 592.600)"><use href="#d"/><text>Generates</text></g>
          </g>
        </svg>
        <div class="vscroll"><div></div></div>
        <div class="zoom"><div class="track"></div><div class="knob"></div><div class="pct">50%</div></div>
      </div>
    </div>
  </div>
</div>

<div class="taskbar">
  <div class="start"><svg width="16" height="16" viewBox="0 0 16 16" fill="#fff"><path d="M0 2.200L6.700 1.300v6.300H0zM7.500 1.200L16 0v7.600H7.500zM0 8.400h6.700v6.300L0 13.800zM7.500 8.400H16V16l-8.500-1.200z"/></svg></div>
  <div class="tsearch"><svg width="17" height="17" viewBox="0 0 17 17" fill="none" stroke="#111" stroke-width="1.300"><circle cx="10.700" cy="6.300" r="5.300"/><path d="M7 10L.5 16.500"/></svg><span>Type here to search</span><div class="tbag"><svg width="30" height="25"><use href="#bag"/></svg></div></div>
  <div class="ti"><svg width="18" height="16" viewBox="0 0 18 16" fill="none" stroke="#fff" stroke-width="1.100"><rect x="1.500" y="4.500" width="9.500" height="7"/><path d="M.8 0v2h11V0M.8 16v-2h11v2M15.500 0v3M15.500 10v6"/><path d="M15.500 4.500V8" stroke-width="3"/></svg></div>
  <div class="ti edge"><svg width="26" height="26" viewBox="0 0 26 26"><path d="M1 12Q2.500 1 13 1q11 .5 12 10-.2 6-6.500 6-4 0-3.500-2.500.8-3.500-2.500-4.500Q5 8 1 12z" fill="url(#gEdge)"/><path d="M1 12q4-5 10-3-5 3-3 8 2 5 8 5 4 0 6-2-3.500 5-9 5Q1.500 24 1 12z" fill="#1470c8"/><path d="M9 10q-3 4 0 8 4 5 13 2-4 5-10 5-7-1-6-8 .5-5 3-7z" fill="#0d4f9e"/><rect y="17" width="13" height="8" fill="url(#gBag)"/><path d="M4 17v-1.500h5V17" fill="none" stroke="#222"/></svg></div>
  <div class="ti"><svg width="24" height="20" viewBox="0 0 24 20"><path d="M1 0h8l2 3H1z" fill="#d99a10"/><path d="M1 3l10 0 1.500-1.500H23V18H1z" fill="#fcd462"/><path d="M5 19v-6q0-2 2-2h10q2 0 2 2v6h-4v-4H9v4z" fill="#3a96dc"/></svg></div>
  <div class="ti"><svg width="24" height="24" viewBox="0 0 24 24"><path d="M7.500 7V4a4.500 4 0 019 0v3M10 7V4.500Q10 2 12 2" fill="none" stroke="#fff"/><rect x=".5" y="6.500" width="23" height="17" rx="1.500" fill="#fff"/><path d="M6.500 9.500h5v5h-5z" fill="#f25022"/><path d="M12.500 9.500h5v5h-5z" fill="#7fba00"/><path d="M6.500 15.500h5v5h-5z" fill="#00a4ef"/><path d="M12.500 15.500h5v5h-5z" fill="#ffb900"/></svg></div>
  <div class="ti"><svg width="24" height="20" viewBox="0 0 24 20"><path d="M0 7.500L12 .5l12 7v12H0z" fill="#fff"/><path d="M1.500 8h21L14 12l4 3.500z" fill="#1c1c1c"/></svg></div>
  <div class="ti ul"><svg width="25" height="22" viewBox="0 0 25 22"><rect x="8" y="1" width="14" height="12" fill="#1490df"/><path d="M13 1h4.500v4H13zM17.500 5H22v4h-4.500z" fill="#50d9ff"/><path d="M7 9l9 6 8-5v10.500H7z" fill="#1268bc"/><path d="M24 10v10.500L14 14z" fill="#35b8f1"/><rect y="5" width="12" height="12" rx="1" fill="#0f6cbd"/><circle cx="6" cy="11" r="3" fill="none" stroke="#fff" stroke-width="1.800"/></svg></div>
  <div class="ti teams"><svg width="24" height="22" viewBox="0 0 24 22"><circle cx="13" cy="4.500" r="3.500" fill="#7b83eb"/><circle cx="20.500" cy="5.500" r="2.500" fill="#5059c9"/><path d="M17 9h7v6q0 4-4 4.500z" fill="#5059c9"/><path d="M7 9h11v7q-1 5-5.500 5.500Q7 21 7 15z" fill="#7b83eb"/><rect y="5.500" width="11.500" height="11.500" rx="1" fill="#4b53bc"/><path d="M3 8.500h6M6 8.500v6" stroke="#fff" stroke-width="1.500"/></svg></div>
  <div class="ti ul"><svg width="24" height="24" viewBox="0 0 24 24"><circle cx="12" cy="12" r="12" fill="#fbc116"/><path d="M12 12L1.600 6A12 12 0 0122.400 6H12z" fill="#e33b2e"/><path d="M1.600 6A12 12 0 0011 24l5.500-9.500L12 12 6.800 15z" fill="#2da94f"/><circle cx="12" cy="12" r="6" fill="#fff"/><circle cx="12" cy="12" r="4.700" fill="#3b82f0"/></svg></div>
  <div class="tray">
    <svg width="24" height="16" viewBox="0 0 24 16" fill="none" stroke="#fff" stroke-width="1.300"><path d="M20 3.500h3V13q0 2-2 2H3q-2 0-2-2V1h19v12"/><rect x="4" y="6.500" width="4.500" height="5"/><path d="M4 4h13M11 7h6M11 9.500h6M11 12h6"/></svg>
    <svg class="up" width="12" height="7" viewBox="0 0 12 7" fill="none" stroke="#fff" stroke-width="1.200"><path d="M.5 6.500L6 1l5.500 5.500"/></svg>
    <svg class="wifi" width="13" height="13" viewBox="0 0 13 13" fill="none" stroke="#fff"><path d="M.5 11Q1.500 2 12 1M3 12q1-7 9-7.500M6 12.500Q6.500 8 12 7.500"/><circle cx="10.500" cy="11.500" r="1.300" fill="#fff"/></svg>
    <svg class="vol" width="16" height="14" viewBox="0 0 16 14" fill="none" stroke="#fff"><path d="M.5 4.500v5H3L6 12.500V1.500L3 4.500zM8.500 5q1.200 2 0 4M10.500 3q2.600 4 0 8M12.800 1.500q3.500 5.500 0 11"/></svg>
    <span class="lang">ENG</span>
    <div class="clock"><span>10:24</span><span>04-10-2024</span></div>
    <svg class="note" width="26" height="30" viewBox="0 0 26 30"><path d="M1 6h16v13H8l-4 4v-4H1z" fill="#fff"/><path d="M4 9.500h10M4 12.500h10M4 15.500h6" stroke="#1c1c1c"/><circle cx="16.500" cy="21" r="8" fill="#333" stroke="#8a8a8a"/><text x="16.500" y="25">5</text></svg>
  </div>
</div>
</body>
</html>
```
FILE: styles.css
```css
* { box-sizing: border-box; }
body { margin: 0; width: 1366px; height: 768px; overflow: hidden; display: flex; flex-direction: column; background: #f7f7f7; font-family: Roboto, sans-serif; color: #444; }
svg { flex: none; display: block; }
.defs { position: absolute; }

/* browser tabs */
.tabstrip { height: 34px; flex: none; background: #cdcdcd; display: flex; color: #111; }
.corner { width: 131px; display: flex; align-items: center; padding-left: 11px; }
.corner svg:nth-child(2) { margin-left: 20px; }
.corner svg:nth-child(3) { margin-left: 26px; }
.tabs { display: flex; flex: 1; }
.tab { width: 34px; display: flex; align-items: center; }
.tab::before { content: ""; width: 1px; height: 20px; background: #777; margin-right: 6px; }
.tab.dim { color: #777; }
.tab.fade svg { opacity: .5; }
.gfg { font: 700 10px "Liberation Sans", sans-serif; color: #7bb28c; display: flex; letter-spacing: -.5px; }
.gfg i { font-style: normal; transform: scaleX(-1); }
.tab-active { width: 34px; margin-left: -1px; background: #f7f7f7; border-radius: 8px 8px 0 0; display: flex; align-items: center; justify-content: center; padding-left: 2px; }
.tab-new { width: 44px; display: flex; align-items: center; justify-content: center; }
.winctl { display: flex; align-items: center; gap: 36px; padding-right: 18px; }

/* address bar */
.addressbar { height: 38px; flex: none; display: flex; align-items: center; }
.navbtns { width: 100px; display: flex; gap: 28px; padding-left: 20px; align-items: center; }
.pill { width: 998px; height: 30px; flex: none; border-radius: 15px; background: #fff; display: flex; align-items: center; padding-left: 19px; }
.url { font: 13.600px "Noto Sans", sans-serif; color: #757575; width: 857px; flex: none; margin-left: 16px; margin-top: -1px; white-space: nowrap; letter-spacing: -.11px; }
.url i { font-style: normal; color: #111; }
.read { margin-left: 19px; margin-right: 23px; }
.tools-right { flex: 1; display: flex; align-items: center; justify-content: space-between; padding: 0 10px 0 20px; }

/* application frame */
.app { margin: 0 4px; height: 652px; flex: none; background: #fff; border-radius: 8px; overflow: hidden; display: flex; flex-direction: column; box-shadow: 0 0 2px #aaa; }
.head { height: 46px; flex: none; display: flex; align-items: center; }
.logo { margin: 7px 0 0 12px; }
.brand { display: flex; width: 132px; padding-left: 12px; font: 21px/26px "Noto Sans", sans-serif; color: #a0a0a0; margin-top: 2px; letter-spacing: -.35px; }
.brand b { color: #3b3b3b; }
.brand span { font-weight: 500; }
.brand sup { font-size: 6px; line-height: 14px; }
.menu { display: flex; align-self: flex-end; height: 44px; font-size: 14px; letter-spacing: .1px; color: #666; }
.menu a { display: flex; align-items: center; justify-content: center; padding-top: 4px; }
.menu .m1 { width: 51px; padding-left: 4px; }
.m2 { width: 57px; background: #e1e3e5; color: #111; }
.m3 { width: 67px; }
.m4 { width: 52px; }
.m5 { width: 56px; }
.m6 { width: 71px; }
.m7 { width: 73px; }
.buy { width: 87px; height: 27px; margin-left: 9px; margin-top: 3px; border: 1px solid #fbc040; border-radius: 5px; background: #fcd76a; font-size: 14.500px; color: #333; display: flex; align-items: center; justify-content: center; }
.saved { display: flex; align-items: center; gap: 5px; margin-left: 284px; padding-top: 4px; font-size: 13.600px; color: #333; letter-spacing: .13px; width: 239px; white-space: nowrap; }
.share { width: 80px; height: 22px; margin-top: 4px; border: 1px solid #fbbf3c; border-radius: 5px; background: linear-gradient(#fffaf0, #fcd976); display: flex; align-items: center; gap: 6px; padding-left: 12px; font-size: 14px; color: #333; }
.eye { width: 35px; height: 22px; margin: 4px 0 0 10px; border-radius: 5px; background: #ececec; display: flex; align-items: center; justify-content: center; }

/* ribbon */
.ribbon { height: 72px; flex: none; border-top: 1px solid #dcdcdc; border-bottom: 1px solid #dcdcdc; display: flex; font-size: 12px; letter-spacing: .05px; }
.arrow-l { width: 27px; background: #f5f5f6; display: flex; align-items: center; justify-content: center; }
.arrow-r { width: 27px; background: #e1e3e5; display: flex; align-items: center; justify-content: center; }
.grp { position: relative; display: grid; grid-template-rows: 26px 26px; align-items: center; padding-top: 7px; }
.grp::after { content: ""; position: absolute; right: 0; top: 10px; width: 1px; height: 50px; background: #e6e6e6; }
.btn { display: flex; align-items: center; white-space: nowrap; }
.btn > svg:first-child { margin-right: 2px; }
.stk > svg:first-child { margin-right: 1px; }
.btn .cv { margin: 2px 0 0 6px; }
.off { color: #c4c4c4; }
.g-export { width: 95px; margin-right: 1px; justify-items: center; grid-template-rows: 30px 18px; }
.g-export::after { right: -1px; }
.g-export > svg { margin-top: 4px; }
.g-export .btn svg { margin: 2px 0 0 6px; }
.g-clip { width: 276px; grid-template-columns: 64px 113px 1fr; padding-left: 14px; }
.g-undo { width: 83px; padding-left: 20px; }
.g-style { width: 310px; grid-template-columns: 95px 105px 1fr; padding-left: 19px; }
.g-style .cv { margin-left: 5px; }
.g-font { width: 230px; padding: 11px 0 0 16px; grid-template-rows: 28px 30px; }
.fontrow { display: flex; gap: 1px; }
.fname { width: 152px; height: 27px; border: 1px solid #e6e6e6; border-radius: 4px; padding: 5px 10px; }
.fsize { width: 44px; height: 27px; background: #f4f5f8; border-radius: 5px; padding: 0 6px 0 7px; display: flex; align-items: center; justify-content: space-between; }
.fmt { display: flex; align-items: center; font-size: 14px; margin-left: -7px; }
.fmt > * { width: 30.200px; display: flex; justify-content: center; }
.fmt b { font-weight: 900; }
.fmt em { font-family: "Liberation Mono", monospace; }
.fmt u { text-decoration: underline; }
.fmt sub, .fmt sup { font-size: 7px; }
.fmt sub { padding-top: 7px; }
.g-arr { width: 309px; grid-template-columns: 87px 85px 108px 1fr; padding: 9px 0 0 22px; overflow: hidden; }
.g-arr::after { top: 0; height: 70px; }

/* body columns */
.main { flex: 1; display: flex; min-height: 0; }
.rail { width: 50px; background: #f4f5f8; display: flex; flex-direction: column; }
.r { height: 40px; display: flex; align-items: center; justify-content: center; padding: 0 1px 1px 0; }
.on { background: #fff; }
.help { margin-top: auto; padding: 0 0 21px 15px; }
.panel { width: 285px; padding: 0 17px 0 19px; overflow: hidden; font-size: 12px; letter-spacing: .05px; }
.ptitle { height: 46px; display: flex; align-items: center; gap: 8px; font-size: 18px; }
.ptitle svg { margin-top: 3px; }
.toolrow { display: flex; height: 60px; margin-left: 1px; margin-right: -10px; }
.tool { width: 55px; flex: none; display: flex; flex-direction: column; align-items: center; padding-top: 10px; gap: 5px; color: #333; }
.sel { background: #fcd76a; border: 1px solid #fbbf3c; border-radius: 5px; padding-top: 9px; color: #111; }
.tcv { margin: 13px 0 0 4px; }
.tool.t2 { width: 56px; margin-left: 5px; }
.tool.t3 { width: 44px; margin-left: 5px; }
.tool.t4 { width: 48px; margin-left: 2px; }
.acc { height: 30px; margin-bottom: 10px; background: #f4f5f8; border-radius: 6px; display: flex; align-items: center; gap: 6px; padding: 2px 0 0 12px; }
.toolrow + .acc { margin-top: 11px; margin-bottom: 0; }
.acc.closed svg { transform: rotate(-90deg); }
.acc.open { margin-bottom: 0; }
.opt { height: 30px; display: flex; align-items: center; color: #c4c4c4; padding-left: 21px; gap: 6px; }
.o1 { margin-top: 4px; }
.o2 { margin-bottom: 14px; }
.opt b { font-size: 10px; width: 13px; white-space: nowrap; letter-spacing: -.9px; }
.syms { height: 132px; border: 1px solid #ebebeb; border-top: 0; border-radius: 0 0 5px 5px; display: grid; grid-template-columns: repeat(4, 55px); grid-auto-rows: 55px; padding: 12px 0 0 9px; }
.syms div { display: flex; align-items: center; justify-content: center; }
.syms svg { fill: none; stroke: #999; stroke-width: 1; }
.syms .soft svg { stroke: #b4b4b4; }
.syms text { font: 4.500px "Liberation Sans", sans-serif; fill: #777; stroke: none; text-anchor: middle; text-rendering: geometricPrecision; }
.syms .pick { border: 1px solid #fbbf3c; border-radius: 5px; background: linear-gradient(#fff8e8, #fcd464); }
.ptitle2 { font-size: 18px; height: 55px; display: flex; align-items: center; padding-top: 13px; }
.find { height: 30px; display: flex; align-items: center; color: #888; }
.ph { width: 155px; height: 30px; flex: none; background: #f4f5f8; border-radius: 6px 0 0 0; padding: 8px 0 0 15px; }
.go { width: 42px; height: 30px; flex: none; background: #ddd; border-radius: 0 6px 0 0; padding: 7px 13px; }
.find b { color: #2b6cf0; font-weight: 500; margin-left: 9px; }
.find i { width: 10px; height: 10px; flex: none; border-radius: 5px; background: #2b6cf0; color: #fff; font-size: 10px; line-height: 10px; text-align: center; margin-left: 4px; }
.pscroll { width: 7px; background: #eee; }
.pscroll div { height: 346px; background: #c9c9c9; border-radius: 4px; }

/* canvas side */
.work { flex: 1; display: flex; flex-direction: column; background: #e1e3e5; border-left: 1px solid #dcdcdc; }
.pages { height: 37px; flex: none; display: flex; background: #f4f5f8; }
.pages > div { background: #fff; border-right: 1px solid #e6e6e6; display: flex; align-items: center; justify-content: center; }
.pages .plist { width: 32px; padding-right: 1px; }
.pname { width: 140px; font-size: 13px; color: #888; letter-spacing: .1px; }
.pages .padd { width: 33px; padding-right: 1px; }
.warn { height: 58px; flex: none; background: #fdf7e3; border: 1px solid #faebcc; color: #c09853; font-size: 13.800px; line-height: 20px; padding: 8px 0 0 13px; letter-spacing: .2px; white-space: nowrap; }
.warn svg { display: inline-block; vertical-align: -1px; }
.lk { color: #2069f8; }
.stage { flex: 1; position: relative; display: flex; padding-left: 19px; }
.diagram { background: #fff; }
.ln { fill: none; stroke: #e0e0e0; stroke-width: 1; }
.lb rect { fill: #fff; }
.lb text, .nd text { font: 6.670px "Liberation Sans", sans-serif; text-anchor: middle; transform: translateY(2.200px); text-rendering: geometricPrecision; }
.lb text { fill: #555; }
.nd text { fill: #fff; stroke: #fff; stroke-width: .18px; }
.vscroll { width: 7px; background: #eee; }
.vscroll div { height: 332px; background: #c9c9c9; border-radius: 0 0 4px 4px; }
.zoom { position: absolute; left: 790px; top: 394px; width: 202px; height: 24px; display: flex; align-items: center; }
.track { width: 156px; height: 4px; background: linear-gradient(90deg, #d0d0d0 16px, #e9e9e9 16px); }
.pct { width: 45px; height: 24px; background: #ededed; clip-path: polygon(0 50%, 25% 0, 100% 0, 100% 100%, 25% 100%); font: 12px/24px Inter, sans-serif; color: #333; padding-left: 12px; }
.knob { position: absolute; left: 9px; top: 3px; width: 14px; height: 18px; background: #fff; border: 1px solid #555; border-radius: 2px; box-shadow: 1px 1px 2px #777; }

/* windows taskbar */
.taskbar { height: 40px; margin-top: auto; flex: none; background: #1c1c1c; display: flex; color: #fff; font-family: "Noto Sans", sans-serif; }
.start { width: 48px; display: flex; align-items: center; justify-content: center; }
.tsearch { width: 288px; background: #f2f2f2; border: 1px solid #bbb; display: flex; align-items: center; padding-left: 11px; color: #333; }
.tsearch span { font-size: 14.300px; margin-left: 11px; width: 172px; letter-spacing: -.2px; white-space: nowrap; }
.tbag { width: 72px; height: 32px; border-radius: 6px; background: #e2e2e2; display: flex; justify-content: center; align-items: center; }
.ti { width: 48px; margin-right: 1px; display: flex; align-items: center; justify-content: center; }
.edge { background: #4b4b4b; border-bottom: 2px solid #76b9ed; margin-left: 2px; }
.ul { background: linear-gradient(#76b9ed, #76b9ed) center bottom / 40px 2px no-repeat; }
.teams { background: #a65c24; border-bottom: 2px solid #ff7800; margin-right: 1px; }
.tray { margin-left: auto; display: flex; align-items: center; font-size: 12px; }
.up { margin-left: 26px; }
.wifi { margin-left: 13px; }
.vol { margin-left: 8px; }
.lang { margin-left: 10px; letter-spacing: -.2px; }
.clock { width: 60px; margin-left: 11px; margin-right: 1px; display: flex; flex-direction: column; align-items: center; line-height: 18px; letter-spacing: -.35px; }
.note { margin: 0 16px 0 15px; }
.note text { font: 11px "Noto Sans", sans-serif; fill: #fff; text-anchor: middle; }
```
